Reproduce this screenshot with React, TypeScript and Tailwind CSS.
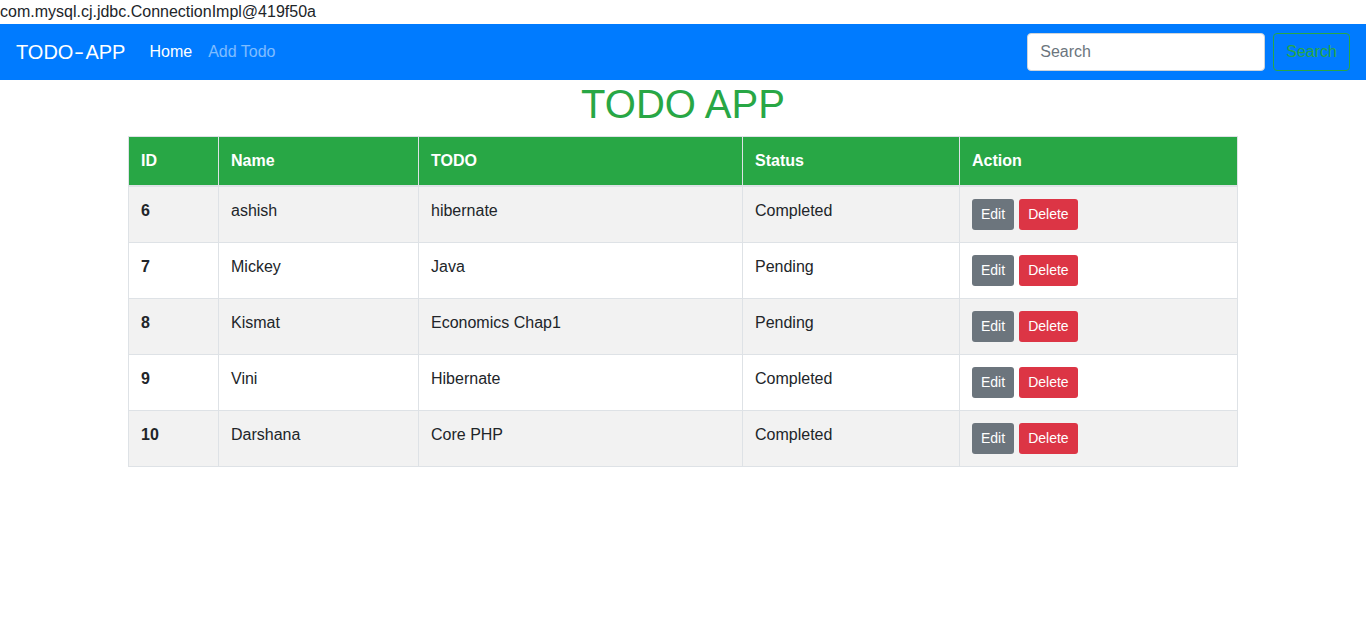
import React from 'react';

const todos = [
  { id: 6, name: 'ashish', todo: 'hibernate', status: 'Completed' },
  { id: 7, name: 'Mickey', todo: 'Java', status: 'Pending' },
  { id: 8, name: 'Kismat', todo: 'Economics Chap1', status: 'Pending' },
  { id: 9, name: 'Vini', todo: 'Hibernate', status: 'Completed' },
  { id: 10, name: 'Darshana', todo: 'Core PHP', status: 'Completed' },
];

const cell = 'border border-[#dee2e6] px-3 py-3 align-top text-left';
const head = 'border border-b-2 border-[#dee2e6] px-3 py-3 align-bottom text-left font-bold';

export default function App() {
  return (
    <div className="min-h-screen bg-white text-[16px] leading-6 text-[#212529] [font-family:'Liberation_Sans',Arial,sans-serif]">
      <div className="h-6">com.mysql.cj.jdbc.ConnectionImpl@419f50a</div>

      {/* Navbar */}
      <nav className="flex h-14 items-center justify-between bg-[#007bff] px-4">
        <div className="flex items-center">
          <span className="mr-4 text-[20px] leading-[30px] text-white">
            TODO<span className="inline-block w-[12px] scale-x-150 text-center">-</span>APP
          </span>
          <a className="px-2 text-white">Home</a>
          <a className="px-2 text-white/50">Add Todo</a>
        </div>
        <form className="flex items-center">
          <input
            type="text"
            placeholder="Search"
            className="mr-2 h-[38px] w-[238px] rounded border border-[#ced4da] bg-white px-3 text-[16px] text-[#495057] outline-none placeholder:text-[#6c757d]"
          />
          <button
            type="button"
            className="h-[38px] rounded border border-[#28a745] px-3 text-[16px] text-[#28a745]"
          >
            Search
          </button>
        </form>
      </nav>

      {/* Content */}
      <div className="mx-auto w-[1140px] px-[15px]">
        <h1 className="mb-2 text-center text-[40px] font-normal leading-[48px] text-[#28a745]">TODO APP</h1>
        <table className="w-full border-collapse">
          <thead>
            <tr className="bg-[#28a745] text-white">
              <th className={`${head} w-[90px]`}>ID</th>
              <th className={`${head} w-[200px]`}>Name</th>
              <th className={`${head} w-[324px]`}>TODO</th>
              <th className={`${head} w-[217px]`}>Status</th>
              <th className={head}>Action</th>
            </tr>
          </thead>
          <tbody>
            {todos.map((t, i) => (
              <tr key={t.id} className={i % 2 === 0 ? 'bg-[#f2f2f2]' : 'bg-white'}>
                <th className={`${cell} font-bold`}>{t.id}</th>
                <td className={cell}>{t.name}</td>
                <td className={cell}>{t.todo}</td>
                <td className={cell}>{t.status}</td>
                <td className={cell}>
                  <div className="flex gap-[5px]">
                    <button className="h-[31px] rounded-[3px] bg-[#6c757d] px-[9px] text-[14px] leading-[21px] text-white">
                      Edit
                    </button>
                    <button className="h-[31px] rounded-[3px] bg-[#dc3545] px-[9px] text-[14px] leading-[21px] text-white">
                      Delete
                    </button>
                  </div>
                </td>
              </tr>
            ))}
          </tbody>
        </table>
      </div>
    </div>
  );
}
